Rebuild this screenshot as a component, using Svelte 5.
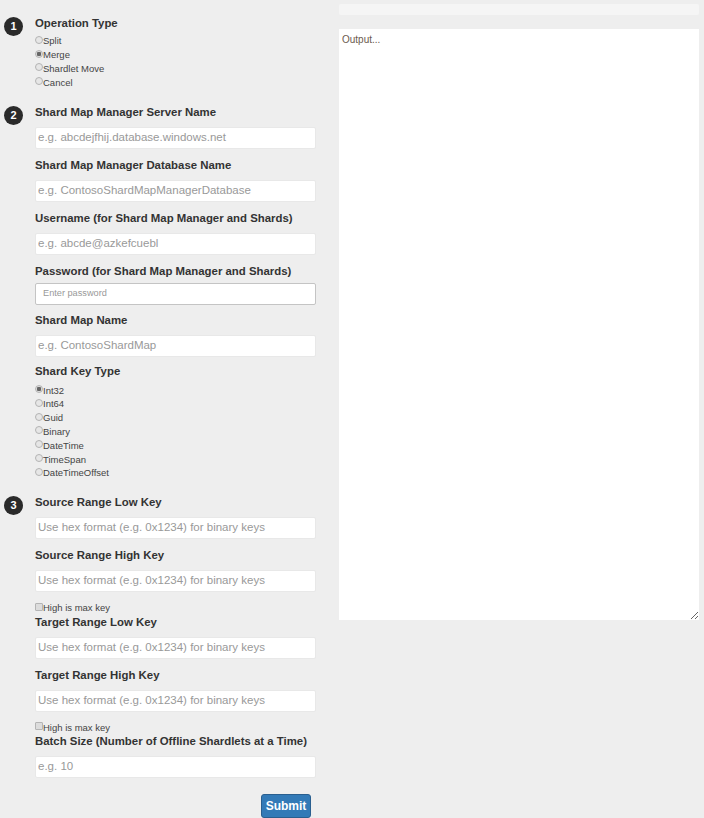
<script>
  const opTypes = ['Split', 'Merge', 'Shardlet Move', 'Cancel'];
  const keyTypes = ['Int32', 'Int64', 'Guid', 'Binary', 'DateTime', 'TimeSpan', 'DateTimeOffset'];
  const hex = 'Use hex format (e.g. 0x1234) for binary keys';
</script>

{#snippet field(label, placeholder)}
  <div class="field">
    <label class="lbl">{label}<input type="text" {placeholder} /></label>
  </div>
{/snippet}

{#snippet radios(name, items, selected)}
  <div class="radios">
    {#each items as item}
      <label class="opt"><input type="radio" {name} value={item} checked={item === selected} />{item}</label>
    {/each}
  </div>
{/snippet}

<div class="page">
  <form class="left">
    <section class="step s1">
      <span class="badge">1</span>
      <div class="body">
        <div class="lbl optype">Operation Type</div>
        {@render radios('op', opTypes, 'Merge')}
      </div>
    </section>

    <section class="step s2">
      <span class="badge">2</span>
      <div class="body">
        {@render field('Shard Map Manager Server Name', 'e.g. abcdejfhij.database.windows.net')}
        {@render field('Shard Map Manager Database Name', 'e.g. ContosoShardMapManagerDatabase')}
        {@render field('Username (for Shard Map Manager and Shards)', 'e.g. abcde@azkefcuebl')}
        <div class="field pw">
          <label class="lbl">Password (for Shard Map Manager and Shards)<input type="password" placeholder="Enter password" /></label>
        </div>
        {@render field('Shard Map Name', 'e.g. ContosoShardMap')}
        <div class="lbl keytype">Shard Key Type</div>
        {@render radios('key', keyTypes, 'Int32')}
      </div>
    </section>

    <section class="step s3">
      <span class="badge">3</span>
      <div class="body">
        {@render field('Source Range Low Key', hex)}
        {@render field('Source Range High Key', hex)}
        <label class="opt check"><input type="checkbox" />High is max key</label>
        {@render field('Target Range Low Key', hex)}
        {@render field('Target Range High Key', hex)}
        <label class="opt check"><input type="checkbox" />High is max key</label>
        {@render field('Batch Size (Number of Offline Shardlets at a Time)', 'e.g. 10')}
        <div class="actions"><button type="button">Submit</button></div>
      </div>
    </section>
  </form>

  <div class="right">
    <div class="bar"></div>
    <textarea class="output" placeholder="Output..."></textarea>
  </div>
</div>

<style>
  :global(body) {
    margin: 0;
    background: #eeeeee;
  }
  .page {
    display: grid;
    grid-template-columns: 339px 360px;
    height: 818px;
    overflow: hidden;
    font-family: "Liberation Sans", Arial, sans-serif;
    color: #333;
  }
  .left {
    padding-top: 16px;
  }
  .step {
    display: flex;
    align-items: flex-start;
    width: 316px;
  }
  .s2 {
    margin-top: 16px;
  }
  .s3 {
    margin-top: 15px;
  }
  .badge {
    flex: none;
    width: 19px;
    height: 19px;
    margin: 1px 12px 0 4px;
    border-radius: 50%;
    background: #2a2a2a;
    color: #fff;
    font-size: 11px;
    font-weight: 700;
    line-height: 19px;
    text-align: center;
  }
  .body {
    flex: 1;
    min-width: 0;
  }
  .lbl {
    display: block;
    font-size: 11.4px;
    font-weight: 700;
    line-height: 14px;
    color: #333;
  }
  .optype {
    margin-bottom: 4px;
  }
  .field {
    margin-bottom: 9px;
  }
  input[type="text"],
  input[type="password"] {
    display: block;
    box-sizing: border-box;
    width: 100%;
    height: 22px;
    margin-top: 8px;
    padding: 0 2px 2px;
    border: 1px solid #e8e8e8;
    border-radius: 2px;
    background: #fff;
    font: 400 11.5px "Liberation Sans", Arial, sans-serif;
    outline: none;
  }
  input::placeholder {
    color: #999;
    opacity: 1;
  }
  .pw {
    margin-bottom: 8px;
  }
  .pw input[type="password"] {
    padding: 0 7px 2px;
    border: 1px solid #c4c4c4;
    font-size: 9.2px;
    margin-top: 5px;
  }
  .keytype {
    margin-top: -2px;
    margin-bottom: 5px;
  }
  .radios {
    display: flex;
    flex-direction: column;
  }
  .opt {
    display: flex;
    align-items: center;
    height: 13.8px;
    font-size: 9.5px;
    font-weight: 400;
    color: #444;
  }
  .opt input {
    appearance: none;
    flex: none;
    box-sizing: border-box;
    width: 8px;
    height: 8px;
    margin: -2px 0 0;
    border: 1px solid #b4b4b4;
    background: #e6e6e6;
  }
  .opt input[type="radio"] {
    border-radius: 50%;
  }
  .opt input[type="radio"]:checked {
    background: radial-gradient(circle, #666 0 2px, #ddd 2.5px);
  }
  .opt input[type="checkbox"] {
    border-radius: 1px;
    background: #dcdcdc;
  }
  .check {
    margin-top: 0;
  }
  .actions {
    display: flex;
    justify-content: flex-end;
    padding-right: 5px;
    margin-top: 16px;
  }
  button {
    box-sizing: border-box;
    width: 50px;
    height: 24px;
    padding: 0;
    border: 1px solid #2a5f8f;
    border-radius: 3px;
    background: #337ab7;
    color: #fff;
    font: 700 12px "Liberation Sans", Arial, sans-serif;
  }
  .right {
    padding-top: 4px;
    display: flex;
    flex-direction: column;
  }
  .bar {
    height: 11px;
    border-radius: 2px;
    background: #f5f5f5;
  }
  .output {
    box-sizing: border-box;
    width: 360px;
    height: 591px;
    margin-top: 14px;
    padding: 5px 3px;
    border: 0;
    background: #fff;
    font: 400 10px "Liberation Sans", Arial, sans-serif;
    outline: none;
    resize: vertical;
  }
  .output::placeholder {
    color: #6b5a4e;
    opacity: 1;
  }
</style>
